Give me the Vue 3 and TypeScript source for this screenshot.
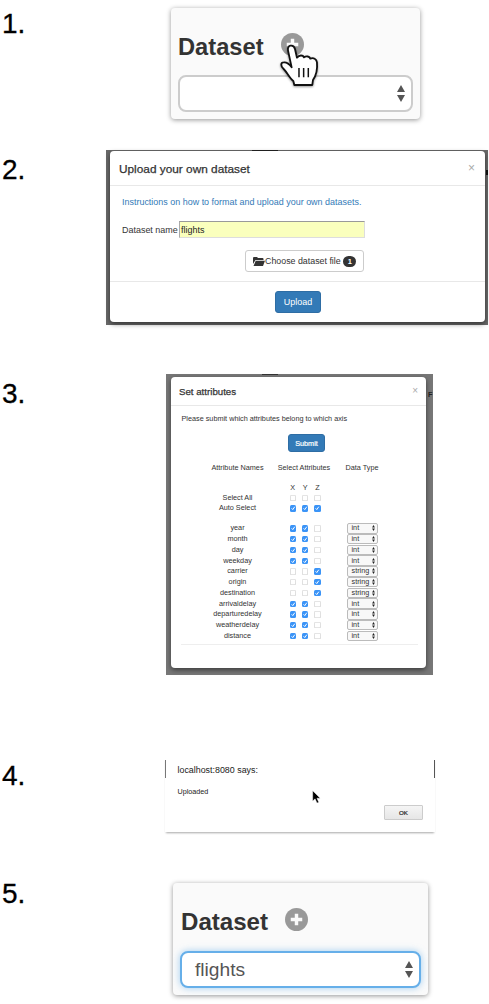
<script setup lang="ts">
interface Attribute {
  name: string
  axes: boolean[]
  type: string
}

const numeric = (name: string): Attribute => ({ name, axes: [true, true, false], type: 'int' })
const text = (name: string): Attribute => ({ name, axes: [false, false, true], type: 'string' })

const presets = [
  { name: 'Select All', axes: [false, false, false] },
  { name: 'Auto Select', axes: [true, true, true] },
]

const attributes: Attribute[] = [
  numeric('year'),
  numeric('month'),
  numeric('day'),
  numeric('weekday'),
  text('carrier'),
  text('origin'),
  text('destination'),
  numeric('arrivaldelay'),
  numeric('departuredelay'),
  numeric('weatherdelay'),
  numeric('distance'),
]
</script>

<template>
  <main class="guide">
    <section class="step step-1">
      <span class="number">1.</span>
      <div class="card">
        <div class="card-head">
          <h2>Dataset</h2>
          <svg class="plus" viewBox="0 0 24 24"><circle cx="12" cy="12" r="12" /><path d="M12 6v12M6 12h12" /></svg>
        </div>
        <div class="picker">
          <span></span>
          <svg class="arrows" viewBox="0 0 8 17"><path d="M4 0l4 7H0zM0 10h8l-4 7z" /></svg>
        </div>
        <svg class="hand" viewBox="350 130 130 140">
          <path d="M383 152C380 135 400 133 404 148L410 174C417 165 428 166 431 173C438 168 448 170 450 177C459 173 469 178 470 188C472 209 467 228 458 241L456 256H402L399 244C388 237 381 219 370 208C360 200 361 188 370 188C378 187 387 193 394 203Z" />
          <path class="creases" d="M416 205v28M430 205v28M444 205v28" />
        </svg>
      </div>
    </section>

    <section class="step step-2">
      <span class="number">2.</span>
      <div class="backdrop">
        <div class="modal">
          <header>
            <h3>Upload your own dataset</h3>
            <span class="close">×</span>
          </header>
          <div class="body">
            <a>Instructions on how to format and upload your own datasets.</a>
            <div class="field">
              <label>Dataset name</label>
              <div class="entry">flights</div>
            </div>
            <div class="choose">
              <svg class="folder" viewBox="0 0 24 18">
                <path d="M0 14V2q0-2 2-2h6l2 2h9q2 0 2 2v2H5z" />
                <path d="M5.500 7.500H24L20 18H1z" />
              </svg>
              <span>Choose dataset file</span>
              <b>1</b>
            </div>
          </div>
          <footer><button>Upload</button></footer>
        </div>
      </div>
    </section>

    <section class="step step-3">
      <span class="number">3.</span>
      <div class="backdrop">
        <span class="behind">F</span>
        <div class="modal">
          <header>
            <h3>Set attributes</h3>
            <span class="close">×</span>
          </header>
          <div class="body">
            <p>Please submit which attributes belong to which axis</p>
            <button>Submit</button>
            <div class="line heads">
              <span>Attribute Names</span><span>Select Attributes</span><span>Data Type</span>
            </div>
            <div class="line axes">
              <span></span>
              <span class="checks"><i>X</i><i>Y</i><i>Z</i></span>
            </div>
            <div v-for="preset in presets" :key="preset.name" class="line preset">
              <span>{{ preset.name }}</span>
              <span class="checks">
                <svg v-for="(on, i) in preset.axes" :key="i" class="check" :class="{ on }" viewBox="0 0 6 6"><path d="M1.500 3.100l1.100 1.200L4.500 1.600" /></svg>
              </span>
            </div>
            <div class="rows">
              <div v-for="row in attributes" :key="row.name" class="line row">
                <span>{{ row.name }}</span>
                <span class="checks">
                  <svg v-for="(on, i) in row.axes" :key="i" class="check" :class="{ on }" viewBox="0 0 6 6"><path d="M1.500 3.100l1.100 1.200L4.500 1.600" /></svg>
                </span>
                <span class="type">
                  {{ row.type }}
                  <svg viewBox="0 0 8 17"><path d="M4 0l4 7H0zM0 10h8l-4 7z" /></svg>
                </span>
              </div>
            </div>
          </div>
        </div>
      </div>
    </section>

    <section class="step step-4">
      <span class="number">4.</span>
      <div class="alert">
        <strong>localhost:8080 says:</strong>
        <p>Uploaded</p>
        <button>OK</button>
        <svg class="pointer" viewBox="0 0 9 14"><path d="M.7.700V11l2.400-2.200 1.900 4.300 1.800-.8-1.900-4.100h3.300z" /></svg>
      </div>
    </section>

    <section class="step step-5">
      <span class="number">5.</span>
      <div class="card">
        <div class="card-head">
          <h2>Dataset</h2>
          <svg class="plus" viewBox="0 0 24 24"><circle cx="12" cy="12" r="12" /><path d="M12 6v12M6 12h12" /></svg>
        </div>
        <div class="picker focused">
          <span>flights</span>
          <svg class="arrows" viewBox="0 0 8 17"><path d="M4 0l4 7H0zM0 10h8l-4 7z" /></svg>
        </div>
      </div>
    </section>
  </main>
</template>

<style>
body {
  margin: 0;
  background: #fff;
}
</style>

<style scoped>
* {
  box-sizing: border-box;
}

.guide {
  width: 489px;
  height: 1004px;
  overflow: hidden;
  font-family: "Liberation Sans", Arial, sans-serif;
  color: #333;
}

h2, h3, p {
  margin: 0;
}

button {
  display: block;
  padding: 0;
  font-family: inherit;
}

.step {
  display: flex;
  align-items: flex-start;
}

.step-1 { height: 150px; padding-top: 8px; }
.step-2 { height: 224px; }
.step-3 { height: 384px; }
.step-4 { height: 125px; }
.step-5 { height: 121px; }

.number {
  flex: none;
  padding-left: 2px;
  font-size: 28px;
  line-height: 32px;
  color: #000;
  -webkit-text-stroke: .3px #000;
}

.step-1 .number { width: 171px; }
.step-2 .number { width: 106px; padding-top: 4px; }
.step-3 .number { width: 166px; padding-top: 4px; }
.step-4 .number { width: 165px; padding-top: 2px; }
.step-5 .number { width: 173px; margin-top: -5px; }

/* Dataset cards */
.card {
  position: relative;
  width: 249px;
  height: 111px;
  padding: 20px 7px 0;
  background: #fafafa;
  border-radius: 4px;
  box-shadow: 0 1px 5px rgba(0, 0, 0, .42);
}

.card-head {
  display: flex;
  align-items: center;
  height: 37px;
}

h2 {
  width: 103px;
  font-size: 23.7px;
  line-height: 36px;
}

.plus {
  width: 23px;
  height: 23px;
  margin-bottom: 4px;
  fill: #999;
}

.plus path {
  stroke: #fafafa;
  stroke-width: 3.600;
}

.picker {
  display: flex;
  align-items: center;
  justify-content: space-between;
  height: 37px;
  margin-top: 10px;
  padding: 0 6px 0 13px;
  background: #fff;
  border: 2px solid #ccc;
  border-radius: 8px;
  font-size: 19.2px;
  color: #555;
}

.arrows {
  width: 8px;
  height: 17px;
  fill: #555;
}

.hand {
  position: absolute;
  left: 105.700px;
  top: 35.300px;
  width: 43.300px;
  height: 46.700px;
  fill: #fff;
  stroke: #111;
  stroke-width: 5.500;
  stroke-linejoin: round;
  filter: drop-shadow(0 1px 1px rgba(0, 0, 0, .4));
}

.creases {
  stroke-width: 4.500;
}

.step-5 .card {
  width: 255px;
  height: 112px;
}

.step-5 h2 {
  width: 105px;
  padding-left: 1px;
  font-size: 24.100px;
}

.step-5 .card-head {
  margin-bottom: 11px;
}

.picker.focused {
  border-color: #66afe9;
  box-shadow: 0 0 7px rgba(102, 175, 233, .6);
}

/* Modal dialogs */
.backdrop {
  position: relative;
  background: #696969;
}

.modal {
  background: #fff;
  border-radius: 4px;
  box-shadow: 0 2px 5px rgba(0, 0, 0, .5);
}

header {
  display: flex;
  justify-content: space-between;
  border-bottom: 1px solid #e8e8e8;
}

h3 {
  font-weight: 400;
  -webkit-text-stroke: .25px #333;
}

.close {
  color: #aaa;
}

.modal button {
  background: #337ab7;
  border: 1px solid #2e6da4;
  border-radius: 3px;
  color: #fff;
}

.step-2 .backdrop {
  width: 382px;
  height: 175px;
  padding: 1px 3px 0 4px;
  background: linear-gradient(#222, #222) 146px 0 / 26px 1px no-repeat,
    linear-gradient(#111, #111) 380px 20px / 2px 5px no-repeat, #696969;
  font-size: 8.960px;
}

.step-2 .modal {
  height: 171px;
}

.step-2 header {
  height: 35px;
  padding: 9px 10px 0;
}

.step-2 h3 {
  margin-left: -1px;
  font-size: 11.840px;
  line-height: 18px;
}

.step-2 .close {
  font-size: 12px;
  line-height: 16px;
}

.step-2 .body {
  height: 95px;
  padding: 10px 12px 0;
}

.step-2 a {
  display: block;
  line-height: 12px;
  color: #337ab7;
}

.field {
  display: flex;
  align-items: center;
  height: 17px;
  margin-top: 13px;
}

label {
  width: 57px;
  white-space: nowrap;
}

.entry {
  width: 186px;
  height: 17px;
  padding-left: 1px;
  line-height: 16px;
  background: #faffbd;
  border: 1px solid #ddd;
  border-top-color: #999;
  border-left-color: #aaa;
  color: #222;
}

.choose {
  display: flex;
  align-items: center;
  width: 119px;
  height: 22px;
  margin: 12px 0 0 123px;
  padding-left: 7px;
  border: 1px solid #ccc;
  border-radius: 3px;
  font-size: 8.850px;
  white-space: nowrap;
}

.folder {
  width: 12px;
  height: 9px;
  fill: #333;
}

.choose b {
  width: 13px;
  height: 11px;
  margin-left: 2.500px;
  background: #333;
  border-radius: 6px;
  color: #fff;
  font-size: 7.500px;
  line-height: 11px;
  text-align: center;
}

footer {
  height: 41px;
  padding-top: 9px;
  border-top: 1px solid #e8e8e8;
}

.step-2 button {
  width: 46px;
  height: 22px;
  margin-left: 165px;
  font-size: 8.960px;
}

.step-3 .backdrop {
  width: 267px;
  height: 301px;
  padding: 3px 7px 0 5px;
  background: linear-gradient(#333, #333) 96px 0 / 16px 1px no-repeat, #777;
  font-size: 7.280px;
}

.behind {
  position: absolute;
  right: 0;
  top: 16px;
  width: 5px;
  overflow: hidden;
  font-weight: 700;
  color: #222;
}

.step-3 .modal {
  position: relative;
  height: 291px;
}

.step-3 header {
  height: 29px;
  padding: 8px 8px 0;
}

.step-3 h3 {
  font-size: 9.700px;
  line-height: 14px;
}

.step-3 .close {
  font-size: 10px;
  line-height: 11px;
}

.step-3 .body {
  padding: 8px 8px 0 10px;
}

.step-3 p {
  padding-left: .5px;
  line-height: 10px;
}

.step-3 button {
  width: 37px;
  height: 18px;
  margin: 10px 0 10px 107px;
  font-size: 7.280px;
  -webkit-text-stroke: .2px #fff;
}

.line {
  display: grid;
  grid-template-columns: 79px 54px 62px;
  align-items: center;
  padding-left: 17px;
  line-height: 10px;
  text-align: center;
}

.heads {
  height: 11px;
  white-space: nowrap;
}

.axes {
  height: 10px;
  margin-top: 10px;
}

.checks {
  display: flex;
  align-items: center;
  gap: 6px;
  padding-left: 12.500px;
}

.checks i {
  width: 6.400px;
  font-style: normal;
}

.check {
  width: 6.400px;
  height: 6.400px;
  background: #fff;
  border-radius: 1.500px;
  box-shadow: inset 0 0 0 .6px #ccc;
}

.check path {
  fill: none;
  stroke: none;
}

.check.on {
  background: #3b94f7;
  box-shadow: none;
}

.check.on path {
  stroke: #fff;
  stroke-width: .9;
}

.preset {
  height: 10.300px;
}

.rows {
  margin-top: 9.500px;
  padding-bottom: 3px;
  border-bottom: 1px solid #eee;
}

.row {
  height: 10.750px;
}

.type {
  display: flex;
  align-items: center;
  justify-content: space-between;
  width: 31px;
  height: 10.500px;
  margin: 0 auto;
  padding: 0 2px 0 4px;
  background: #f8f8f8;
  border: 1px solid #bbb;
  border-radius: 2px;
  line-height: 8px;
}

.type svg {
  flex: none;
  width: 3px;
  height: 6px;
  fill: #222;
}

/* Browser alert */
.alert {
  position: relative;
  width: 270px;
  height: 74px;
  padding: 7px 12px 0 12.500px;
  background: linear-gradient(#777, #777) 0 2px / 1px 18px no-repeat,
    linear-gradient(#555, #555) 100% 2px / 1px 18px no-repeat, #fff;
  box-shadow: 0 2px 2px -1px rgba(0, 0, 0, .35);
  color: #222;
}

.alert strong {
  display: block;
  font-weight: 400;
  font-size: 8.900px;
  line-height: 10px;
}

.alert p {
  margin-top: 12px;
  font-size: 7.200px;
  line-height: 10px;
}

.alert button {
  width: 39px;
  height: 15px;
  margin: 8px 0 0 auto;
  background: linear-gradient(#f5f5f5, #e6e6e6);
  border: 1px solid #ccc;
  border-radius: 1px;
  font-size: 6.200px;
  color: #222;
  -webkit-text-stroke: .2px #222;
}

.pointer {
  position: absolute;
  left: 147px;
  top: 32px;
  width: 9px;
  height: 14px;
  fill: #000;
  stroke: #fff;
  stroke-width: .4;
}
</style>
